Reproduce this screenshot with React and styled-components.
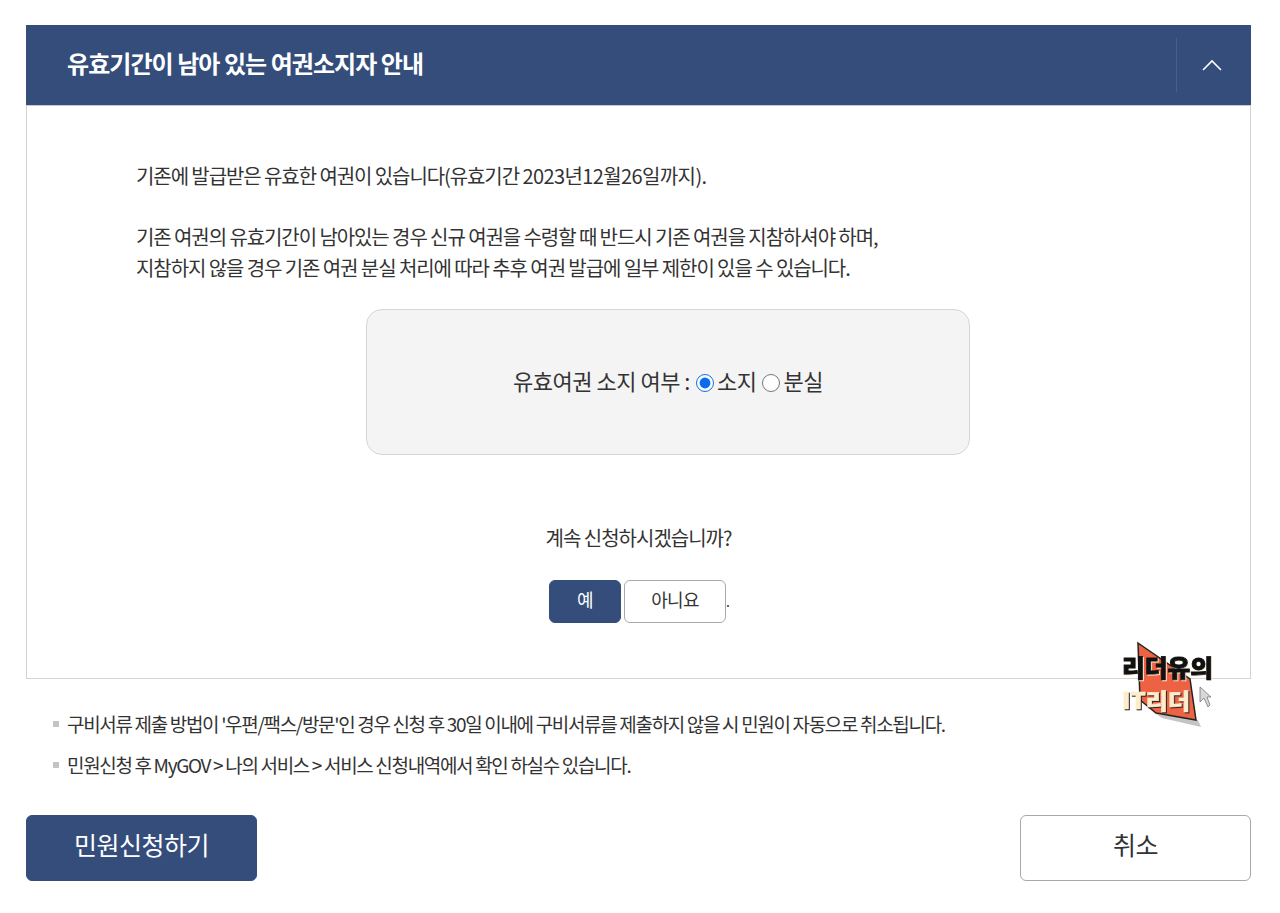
import React from "react";
import styled, { createGlobalStyle } from "styled-components";

const GlobalStyle = createGlobalStyle`
  html, body {
    margin: 0;
    padding: 0;
    background: #fff;
  }
  body {
    font-family: "Noto Sans CJK KR", "Noto Sans", sans-serif;
    color: #333;
  }
`;

const Page = styled.div`
  padding: 25px 29px 0 26px;
  box-sizing: content-box;
  width: 1225px;
  height: 888px;
  position: relative;
`;

const Header = styled.div`
  height: 80px;
  background: #344d7b;
  border-bottom: 1px solid #c9ccd2;
  display: flex;
  align-items: center;
  justify-content: space-between;
`;

const Title = styled.h2`
  margin: 0 0 5px 41px;
  font-size: 24px;
  font-weight: 700;
  letter-spacing: -0.95px;
  color: #fff;
`;

const Toggle = styled.div`
  width: 69px;
  height: 54px;
  padding-right: 5px;
  border-left: 1px solid #475f8a;
  display: flex;
  align-items: center;
  justify-content: center;
`;

const Body = styled.div`
  height: 572px;
  border: 1px solid #d4d4d4;
  border-top: 0;
  display: flex;
  flex-direction: column;
`;

const Message = styled.div`
  margin: 54px 0 0 109px;
  font-size: 20px;
  line-height: 31px;
  letter-spacing: -1.08px;
  color: #333;
`;

const Para = styled.p`
  margin: 0 0 30px;
`;

const Period = styled.span`
  letter-spacing: -0.6px;
`;

const ChoiceBox = styled.div`
  width: 602px;
  height: 140px;
  margin: -4px 0 0 339px;
  padding-bottom: 4px;
  background: #f4f4f4;
  border: 1px solid #d6d6d6;
  border-radius: 16px;
  display: flex;
  align-items: center;
  justify-content: center;
  font-size: 22px;
  letter-spacing: -0.5px;
  color: #333;
`;

const RadioLabel = styled.label`
  display: inline-flex;
  align-items: center;
`;

const Radio = styled.input.attrs({ type: "radio", name: "holding" })`
  width: 18px;
  height: 18px;
  margin: 5px 3px 0 6px;
  accent-color: #0a6cf0;
`;

const Question = styled.div`
  margin-top: 67px;
  text-align: center;
  font-size: 20px;
  line-height: 31px;
  letter-spacing: -1px;
  color: #333;
`;

const ButtonRow = styled.div`
  margin: 27px 0 0 522px;
  display: flex;
  align-items: flex-end;
  gap: 3px;
  font-size: 18px;
  color: #333;
`;

const SmallButton = styled.button`
  width: ${(p) => (p.$primary ? "72px" : "102px")};
  height: 43px;
  padding: 0 0 6px;
  border-radius: 6px;
  border: 1px solid ${(p) => (p.$primary ? "#344d7b" : "#a9a9a9")};
  background: ${(p) => (p.$primary ? "#344d7b" : "#fff")};
  color: ${(p) => (p.$primary ? "#fff" : "#333")};
  font-family: inherit;
  font-size: 18px;
  letter-spacing: -0.8px;
`;

const Dot = styled.span`
  margin: 0 0 10px -3px;
  line-height: 24px;
  font-size: 14px;
`;

const Notes = styled.ul`
  margin: 24px 0 0;
  padding: 0 0 0 41px;
  list-style: none;
`;

const Note = styled.li`
  position: relative;
  height: 41px;
  line-height: 41px;
  font-size: 19px;
  letter-spacing: -1.33px;
  color: #333;

  &::before {
    content: "";
    position: absolute;
    left: -14px;
    top: 18px;
    width: 6px;
    height: 6px;
    background: #c4c4c4;
  }
`;

const Actions = styled.div`
  margin-top: 30px;
  display: flex;
  justify-content: space-between;
`;

const BigButton = styled.button`
  width: 231px;
  height: 66px;
  padding: 0 0 8px;
  border-radius: 6px;
  border: 1px solid ${(p) => (p.$primary ? "#344d7b" : "#a9a9a9")};
  background: ${(p) => (p.$primary ? "#344d7b" : "#fff")};
  color: ${(p) => (p.$primary ? "#fff" : "#333")};
  font-family: inherit;
  font-size: 25px;
  font-weight: 400;
  letter-spacing: -0.5px;
`;

const Logo = styled.svg`
  position: absolute;
  left: 1118px;
  top: 640px;
  width: 100px;
  height: 90px;
`;

const LogoTop = styled.text`
  font-family: "Noto Sans CJK KR", sans-serif;
  font-weight: 900;
  font-size: 24px;
  fill: #111;
  stroke: #111;
  stroke-width: 0.8px;
  filter: drop-shadow(1px 1px 0 #fff0d8);
`;

const LogoBottom = styled.text`
  font-family: "Noto Sans CJK KR", sans-serif;
  font-weight: 900;
  font-size: 22px;
  fill: #ffeccb;
  stroke: #ffeccb;
  stroke-width: 0.6px;
  filter: drop-shadow(1px 1px 0 #222);
`;

function ItLeaderLogo() {
  return (
    <Logo viewBox="0 0 100 90">
      <polygon points="38,74 80,80 83,87 44,78" fill="#c4c4c4" />
      <polygon points="20,3 72,39 78,80 38,73 22,60" fill="#ee6244" stroke="#222" strokeWidth="1.5" />
      <LogoTop x="4" y="37" textLength="91" lengthAdjust="spacingAndGlyphs">리더유의</LogoTop>
      <LogoBottom x="4" y="69" textLength="68" lengthAdjust="spacingAndGlyphs">IT리더</LogoBottom>
      <path d="M82 47 L82 62 L86 58 L90 67 L92 65 L89 57 L93 57 Z" fill="#d8d8d8" stroke="#777" strokeWidth="0.8" />
    </Logo>
  );
}

export default function App() {
  return (
    <Page>
      <GlobalStyle />
      <Header>
        <Title>유효기간이 남아 있는 여권소지자 안내</Title>
        <Toggle>
          <svg width="20" height="12" viewBox="0 0 20 12" fill="none">
            <path d="M1 11 L10 2 L19 11" stroke="#fff" strokeWidth="1.6" />
          </svg>
        </Toggle>
      </Header>
      <Body>
        <Message>
          <Para>
            기존에 발급받은 유효한 여권이 있습니다(유효기간 <Period>2023년12월26일까지).</Period>
          </Para>
          <Para>
            기존 여권의 유효기간이 남아있는 경우 신규 여권을 수령할 때 반드시 기존 여권을 지참하셔야 하며,
            <br />
            지참하지 않을 경우 기존 여권 분실 처리에 따라 추후 여권 발급에 일부 제한이 있을 수 있습니다.
          </Para>
        </Message>
        <ChoiceBox>
          유효여권 소지 여부 :
          <RadioLabel>
            <Radio defaultChecked />
            소지
          </RadioLabel>
          <RadioLabel>
            <Radio />
            분실
          </RadioLabel>
        </ChoiceBox>
        <Question>계속 신청하시겠습니까?</Question>
        <ButtonRow>
          <SmallButton $primary>예</SmallButton>
          <SmallButton>아니요</SmallButton>
          <Dot>.</Dot>
        </ButtonRow>
      </Body>
      <Notes>
        <Note>구비서류 제출 방법이 '우편/팩스/방문'인 경우 신청 후 30일 이내에 구비서류를 제출하지 않을 시 민원이 자동으로 취소됩니다.</Note>
        <Note>민원신청 후 MyGOV &gt; 나의 서비스 &gt; 서비스 신청내역에서 확인 하실수 있습니다.</Note>
      </Notes>
      <Actions>
        <BigButton $primary>민원신청하기</BigButton>
        <BigButton>취소</BigButton>
      </Actions>
      <ItLeaderLogo />
    </Page>
  );
}
